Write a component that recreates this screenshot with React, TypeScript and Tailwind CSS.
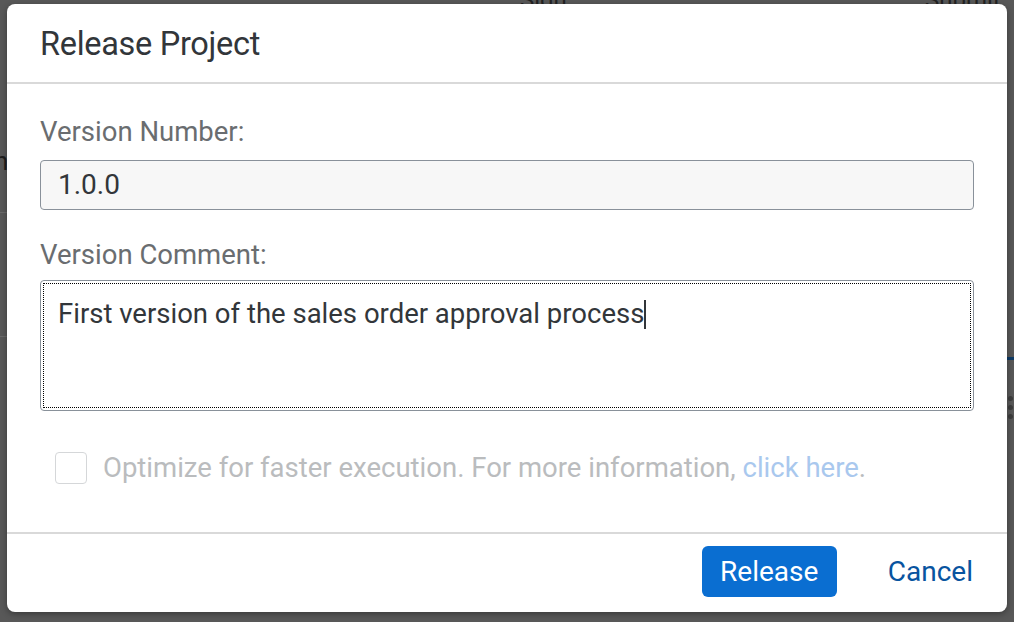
import React from "react";

export default function App() {
  const font = { fontFamily: "Roboto, 'Liberation Sans', sans-serif" };
  return (
    <div className="relative w-[1014px] h-[622px] overflow-hidden bg-[#585858]" style={font}>
      {/* dimmed page behind */}
      <div className="absolute left-0 top-[212px] w-[7px] h-[1px] bg-[#6a6a6a]" />
      <div className="absolute left-0 top-[336px] w-[7px] h-[1px] bg-[#6a6a6a]" />
      <div className="absolute left-[-6px] top-[148px] text-[26px] leading-none text-[#1e1e1e]">n</div>
      <div className="absolute right-0 top-[357px] w-[7px] h-[3px] bg-[#0d3a66]" />
      <div className="absolute right-[1px] top-[396px] flex flex-col gap-[4px]">
        <div className="w-[5px] h-[5px] rounded-full bg-[#3c3c3c]" />
        <div className="w-[5px] h-[5px] rounded-full bg-[#3c3c3c]" />
        <div className="w-[5px] h-[5px] rounded-full bg-[#3c3c3c]" />
      </div>
      <div className="absolute left-[520px] top-[-18px] text-[24px] text-[#222]">Sign</div>
      <div className="absolute left-[925px] top-[-18px] text-[24px] text-[#222]">Submit</div>

      {/* dialog */}
      <div className="absolute left-[7px] top-[4px] w-[1000px] h-[608px] bg-white rounded-[8px] shadow-[0_2px_6px_rgba(0,0,0,0.35)] flex flex-col overflow-hidden">
        <div className="h-[80px] flex items-center px-[33px] border-b-2 border-[#d9d9d9]">
          <span className="text-[32.5px] text-[#32363a] tracking-[-0.3px] translate-y-[1px]">Release Project</span>
        </div>
        <div className="flex-1 flex flex-col px-[33px] pt-[33px]">
          <label className="text-[27.5px] leading-[30px] text-[#6a6d70]">Version Number:</label>
          <div className="mt-[13px] h-[50px] rounded-[4px] border-[1.5px] border-[#89919a] bg-[#f7f7f7] flex items-center px-[17px] text-[28px] text-[#32363a]">
            1.0.0
          </div>
          <label className="mt-[30px] text-[27.5px] leading-[30px] text-[#6a6d70]">Version Comment:</label>
          <div className="mt-[10px] h-[131px] rounded-[4px] border-[1.5px] border-[#89919a] bg-white p-[2px]">
            <div className="h-full border border-dotted border-black pl-[14px] pr-[15px] pt-[13px] text-[27.5px] leading-[34px] text-[#32363a] whitespace-nowrap">
              First version of the sales order approval process
              <span className="inline-block align-middle w-[1.5px] h-[29px] bg-[#32363a] -mt-[3px]" />
            </div>
          </div>
          <div className="mt-[41px] flex items-center gap-[16px] pl-[15px] h-[32px]">
            <div className="w-[32px] h-[32px] shrink-0 rounded-[4px] border-[1.5px] border-[#d5d7d9] bg-white" />
            <span className="text-[27.5px] leading-[32px] text-[#babcbe] whitespace-nowrap">
              Optimize for faster execution. For more information,{" "}
              <span className="text-[#a9c8ee]">click here</span>.
            </span>
          </div>
        </div>
        <div className="h-[80px] border-t-2 border-[#d9d9d9] flex items-start justify-end pt-[12px] pr-[34px]">
          <button className="h-[51px] w-[135px] rounded-[6px] bg-[#0a6ed1] text-white text-[28px]">Release</button>
          <button className="h-[51px] ml-[51px] text-[28px] text-[#0854a0]">Cancel</button>
        </div>
      </div>
    </div>
  );
}
